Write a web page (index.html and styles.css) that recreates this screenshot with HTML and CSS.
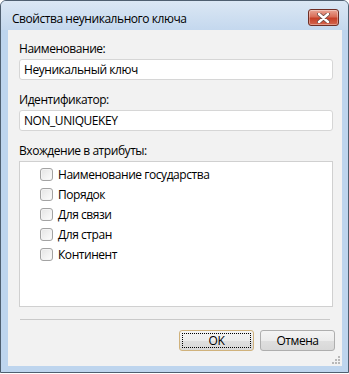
FILE: index.html
```html
<!DOCTYPE html>
<html lang="ru">
<head>
<meta charset="utf-8">
<link rel="stylesheet" href="styles.css">
</head>
<body>
<div class="window">
  <div class="titlebar">
    <span class="title">Свойства неуникального ключа</span>
    <div class="close">
      <svg width="13" height="10" viewBox="0 0 13 10">
        <path d="M2 1 L11 9 M11 1 L2 9" stroke="#6b4a46" stroke-width="4" stroke-linecap="round"/>
        <path d="M2 1 L11 9 M11 1 L2 9" stroke="#ffffff" stroke-width="2.4" stroke-linecap="round"/>
      </svg>
    </div>
  </div>
  <div class="frame">
    <div class="content">
      <div class="label">Наименование:</div>
      <div class="input">Неуникальный ключ</div>
      <div class="label gap">Идентификатор:</div>
      <div class="input">NON_UNIQUEKEY</div>
      <div class="label gap">Вхождение в атрибуты:</div>
      <div class="list">
        <div class="item"><span class="cb"></span><span>Наименование государства</span></div>
        <div class="item"><span class="cb"></span><span>Порядок</span></div>
        <div class="item"><span class="cb"></span><span>Для связи</span></div>
        <div class="item"><span class="cb"></span><span>Для стран</span></div>
        <div class="item"><span class="cb"></span><span>Континент</span></div>
      </div>
      <div class="sep"></div>
      <div class="buttons">
        <div class="btn default"><span class="focus">OK</span></div>
        <div class="btn">Отмена</div>
      </div>
      <svg class="grip" width="10" height="10" viewBox="0 0 10 10">
        <g fill="#b8b8b8">
          <rect x="7" y="1" width="2" height="2"/>
          <rect x="4" y="4" width="2" height="2"/><rect x="7" y="4" width="2" height="2"/>
          <rect x="1" y="7" width="2" height="2"/><rect x="4" y="7" width="2" height="2"/><rect x="7" y="7" width="2" height="2"/>
        </g>
      </svg>
    </div>
  </div>
</div>
</body>
</html>
```

FILE: styles.css
```css
* { box-sizing: border-box; }
html, body { margin: 0; padding: 0; background: #ffffff; }
body {
  font-family: "Open Sans", "Noto Sans", sans-serif;
  font-size: 12px;
  color: #000;
  letter-spacing: -0.45px;
}
.window {
  width: 349px;
  height: 373px;
  border: 1px solid #4f5f70;
  border-radius: 6px 6px 0 0;
  background: #bed5ee;
  display: flex;
  flex-direction: column;
  overflow: hidden;
}
.titlebar {
  height: 29px;
  flex: none;
  display: flex;
  justify-content: space-between;
  align-items: flex-start;
  background: linear-gradient(#dbe7f4, #c4d8ee);
}
.title {
  padding-left: 11px;
  line-height: 16px;
  margin-top: 10px;
}
.close {
  margin-top: 8px;
  margin-right: 9px;
  width: 31px;
  height: 17px;
  border: 1px solid #6e2e25;
  border-radius: 3px;
  background: linear-gradient(#eaa596 0%, #d96d58 45%, #c63f28 55%, #d4664e 100%);
  box-shadow: inset 0 0 0 1px rgba(255,255,255,0.35);
  display: flex;
  align-items: center;
  justify-content: center;
}
.frame {
  flex: 1;
  padding: 0 6px 6px 7px;
  display: flex;
}
.content {
  position: relative;
  flex: 1;
  background: #f2f2f2;
  padding: 11px 9px 0 11px;
  display: flex;
  flex-direction: column;
}
.label {
  line-height: 15px;
  height: 15px;
  margin-bottom: 3px;
}
.label.gap { margin-top: 12px; }
.input {
  height: 21px;
  background: #fff;
  border: 1px solid #d6d6d6;
  border-radius: 3px;
  padding-left: 4px;
  line-height: 19px;
}
.list {
  height: 146px;
  background: #fff;
  border: 1px solid #d0d0d0;
  padding: 2px 0 0 20px;
}
.item {
  height: 20px;
  display: flex;
  align-items: center;
  gap: 5px;
}
.cb {
  width: 13px;
  height: 13px;
  border: 1px solid #a3a3a3;
  border-radius: 3px;
  background: linear-gradient(135deg, #e4e4e4, #fdfdfd);
  box-shadow: inset 0 0 0 1px #f4f4f4;
}
.sep {
  height: 1px;
  background: #c9c9c9;
  margin: 12px 3px 0 1px;
}
.buttons {
  display: flex;
  justify-content: flex-end;
  gap: 6px;
  margin-top: 10px;
  margin-right: -2px;
}
.btn {
  width: 75px;
  height: 21px;
  border: 1px solid #aeaeae;
  border-radius: 3px;
  background: linear-gradient(#f4f4f4 0%, #ececec 50%, #dfdfdf 51%, #d8d8d8 100%);
  display: flex;
  align-items: center;
  justify-content: center;
  line-height: 15px;
}
.btn.default {
  border-color: #d0b27c;
  padding: 2px;
}
.focus {
  flex: 1;
  align-self: stretch;
  border: 1px dotted #000;
  display: flex;
  align-items: center;
  justify-content: center;
}
.grip {
  position: absolute;
  right: 1px;
  bottom: 1px;
}
```
